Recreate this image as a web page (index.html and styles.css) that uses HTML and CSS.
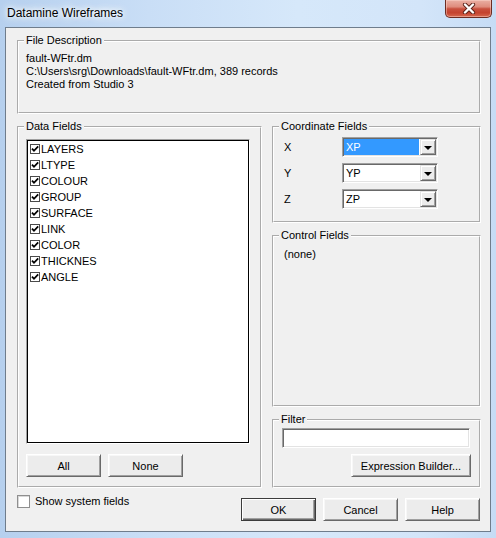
FILE: index.html
```html
<!DOCTYPE html>
<html>
<head>
<meta charset="utf-8">
<title>Datamine Wireframes</title>
<link rel="stylesheet" href="styles.css">
</head>
<body>
<div class="window">
  <div class="titlebar">
    <span class="title">Datamine Wireframes</span>
    <div class="close">
      <svg width="14" height="11" viewBox="0 0 14 11">
        <path d="M3 1.5 L11 9.5 M11 1.5 L3 9.5" stroke="#5b2219" stroke-width="4.2" stroke-linecap="round" fill="none"/>
        <path d="M3 1.5 L11 9.5 M11 1.5 L3 9.5" stroke="#ffffff" stroke-width="2.4" stroke-linecap="round" fill="none"/>
      </svg>
    </div>
  </div>
  <div class="client">
    <fieldset class="group">
      <legend>File Description</legend>
      <div class="desc-body">
        <div>fault-WFtr.dm</div>
        <div>C:\Users\srg\Downloads\fault-WFtr.dm, 389 records</div>
        <div>Created from Studio 3</div>
      </div>
    </fieldset>

    <div class="main">
      <fieldset class="group data-fields">
        <legend>Data Fields</legend>
        <div class="data-body">
          <div class="listbox">
            <div class="item"><span class="chk"><svg width="10" height="10" viewBox="0 0 10 10"><rect x="0.5" y="0.5" width="9" height="9" fill="#fff" stroke="#4a4a4a"/><path d="M2 4.6 L4 6.8 L8.2 2.4" stroke="#000" stroke-width="1.8" fill="none"/></svg></span>LAYERS</div>
            <div class="item"><span class="chk"><svg width="10" height="10" viewBox="0 0 10 10"><rect x="0.5" y="0.5" width="9" height="9" fill="#fff" stroke="#4a4a4a"/><path d="M2 4.6 L4 6.8 L8.2 2.4" stroke="#000" stroke-width="1.8" fill="none"/></svg></span>LTYPE</div>
            <div class="item"><span class="chk"><svg width="10" height="10" viewBox="0 0 10 10"><rect x="0.5" y="0.5" width="9" height="9" fill="#fff" stroke="#4a4a4a"/><path d="M2 4.6 L4 6.8 L8.2 2.4" stroke="#000" stroke-width="1.8" fill="none"/></svg></span>COLOUR</div>
            <div class="item"><span class="chk"><svg width="10" height="10" viewBox="0 0 10 10"><rect x="0.5" y="0.5" width="9" height="9" fill="#fff" stroke="#4a4a4a"/><path d="M2 4.6 L4 6.8 L8.2 2.4" stroke="#000" stroke-width="1.8" fill="none"/></svg></span>GROUP</div>
            <div class="item"><span class="chk"><svg width="10" height="10" viewBox="0 0 10 10"><rect x="0.5" y="0.5" width="9" height="9" fill="#fff" stroke="#4a4a4a"/><path d="M2 4.6 L4 6.8 L8.2 2.4" stroke="#000" stroke-width="1.8" fill="none"/></svg></span>SURFACE</div>
            <div class="item"><span class="chk"><svg width="10" height="10" viewBox="0 0 10 10"><rect x="0.5" y="0.5" width="9" height="9" fill="#fff" stroke="#4a4a4a"/><path d="M2 4.6 L4 6.8 L8.2 2.4" stroke="#000" stroke-width="1.8" fill="none"/></svg></span>LINK</div>
            <div class="item"><span class="chk"><svg width="10" height="10" viewBox="0 0 10 10"><rect x="0.5" y="0.5" width="9" height="9" fill="#fff" stroke="#4a4a4a"/><path d="M2 4.6 L4 6.8 L8.2 2.4" stroke="#000" stroke-width="1.8" fill="none"/></svg></span>COLOR</div>
            <div class="item"><span class="chk"><svg width="10" height="10" viewBox="0 0 10 10"><rect x="0.5" y="0.5" width="9" height="9" fill="#fff" stroke="#4a4a4a"/><path d="M2 4.6 L4 6.8 L8.2 2.4" stroke="#000" stroke-width="1.8" fill="none"/></svg></span>THICKNES</div>
            <div class="item"><span class="chk"><svg width="10" height="10" viewBox="0 0 10 10"><rect x="0.5" y="0.5" width="9" height="9" fill="#fff" stroke="#4a4a4a"/><path d="M2 4.6 L4 6.8 L8.2 2.4" stroke="#000" stroke-width="1.8" fill="none"/></svg></span>ANGLE</div>
          </div>
          <div class="btn-row">
            <button class="btn">All</button>
            <button class="btn">None</button>
          </div>
        </div>
      </fieldset>

      <div class="right-col">
        <fieldset class="group">
          <legend>Coordinate Fields</legend>
          <div class="coord-body">
            <div class="coord-row">
              <span class="coord-label">X</span>
              <div class="combo">
                <div class="combo-edit"><span class="sel">XP</span></div>
                <div class="combo-btn"><span class="tri"></span></div>
              </div>
            </div>
            <div class="coord-row">
              <span class="coord-label">Y</span>
              <div class="combo">
                <div class="combo-edit"><span class="val">YP</span></div>
                <div class="combo-btn"><span class="tri"></span></div>
              </div>
            </div>
            <div class="coord-row">
              <span class="coord-label">Z</span>
              <div class="combo">
                <div class="combo-edit"><span class="val">ZP</span></div>
                <div class="combo-btn"><span class="tri"></span></div>
              </div>
            </div>
          </div>
        </fieldset>

        <fieldset class="group control">
          <legend>Control Fields</legend>
          <div class="control-body">(none)</div>
        </fieldset>

        <fieldset class="group">
          <legend>Filter</legend>
          <div class="filter-body">
            <div class="textbox"></div>
            <button class="btn expr">Expression Builder...</button>
          </div>
        </fieldset>
      </div>
    </div>

    <div class="footer">
      <label class="sys"><span class="box"></span>Show system fields</label>
      <div class="footer-btns">
        <button class="btn default">OK</button>
        <button class="btn">Cancel</button>
        <button class="btn">Help</button>
      </div>
    </div>
  </div>
</div>
</body>
</html>
```
FILE: styles.css
```css
* { box-sizing: border-box; }

html, body {
  margin: 0;
  padding: 0;
}

body {
  width: 496px;
  height: 538px;
  overflow: hidden;
  font-family: "Liberation Sans", Arial, sans-serif;
  font-size: 11px;
  line-height: 13px;
  color: #000;
}

.window {
  width: 496px;
  height: 538px;
  padding: 0 5px 6px 5px;
  display: flex;
  flex-direction: column;
  background: linear-gradient(to right, #b6d0ee 0%, #c9def6 30%, #d6e8fa 60%, #d3e5f9 85%, #c6dcf5 100%);
}

.titlebar {
  height: 27px;
  flex: none;
  display: flex;
  justify-content: space-between;
  align-items: flex-start;
}

.title {
  font-size: 12px;
  line-height: 16px;
  margin: 5px 0 0 2px;
  color: #000;
  text-shadow: 0 0 4px #fff, 0 0 8px #fff, 0 0 10px #eaf4ff;
}

.close {
  width: 47px;
  height: 18px;
  margin-right: -1px;
  border: 1px solid #6c2c22;
  border-top: none;
  border-radius: 0 0 5px 5px;
  background: linear-gradient(#eab0a4 0%, #df8c7d 40%, #c8503e 52%, #c4432f 75%, #d7694f 100%);
  box-shadow: inset 0 0 0 1px rgba(255, 220, 210, 0.45);
  display: flex;
  align-items: center;
  justify-content: center;
}

.close svg { display: block; }

.client {
  flex: 1;
  background: #f0f0f0;
  border: 1px solid #6f7d8c;
  padding: 6px 9px 10px 11px;
  display: flex;
  flex-direction: column;
}

fieldset.group {
  margin: 0;
  padding: 0;
  min-width: 0;
  border: 2px groove #ffffff;
}

fieldset.group legend {
  margin-left: 5px;
  padding: 0 2px;
  line-height: 13px;
}

.desc-body {
  padding: 5px 7px 21px 7px;
}

.main {
  margin-top: 6px;
  display: flex;
  gap: 10px;
}

.data-fields {
  width: 245px;
  flex: none;
}

.data-body {
  padding: 6px 8px 9px 7px;
}

.listbox {
  width: 224px;
  height: 305px;
  background: #fff;
  border: 1px solid;
  border-color: #a0a0a0 #ffffff #ffffff #a0a0a0;
  box-shadow: inset 0 0 0 1px #000;
  padding: 1px;
}

.item {
  height: 16px;
  display: flex;
  align-items: center;
  white-space: nowrap;
}

.chk {
  width: 10px;
  height: 10px;
  margin: 0 1px 0 2px;
  display: block;
}

.chk svg { display: block; }

.btn-row {
  margin-top: 10px;
  display: flex;
  gap: 7px;
}

.btn {
  width: 75px;
  height: 23px;
  padding: 0;
  margin: 0;
  font-family: "Liberation Sans", Arial, sans-serif;
  font-size: 11px;
  color: #000;
  background: #ececec;
  border: 1px solid;
  border-color: #ffffff #696969 #696969 #ffffff;
  box-shadow: inset 1px 1px 0 #f7f7f7, inset -1px -1px 0 #a0a0a0;
}

.btn.default {
  border: 1px solid #3c3c3c;
  box-shadow: inset 1px 1px 0 #fff, inset -1px -1px 0 #696969, inset -2px -2px 0 #a0a0a0;
}

.right-col {
  width: 209px;
  flex: none;
  display: flex;
  flex-direction: column;
  gap: 6px;
}

.coord-body {
  padding: 4px 8px 12px 10px;
  display: flex;
  flex-direction: column;
  gap: 6px;
}

.coord-row {
  display: flex;
  align-items: center;
  height: 20px;
}

.coord-label {
  width: 58px;
  flex: none;
}

.combo {
  width: 96px;
  height: 20px;
  display: flex;
  background: #fff;
  border: 1px solid;
  border-color: #a0a0a0 #ffffff #ffffff #a0a0a0;
  box-shadow: inset 1px 1px 0 #696969, inset -1px -1px 0 #e3e3e3;
  padding: 1px 1px 1px 1px;
}

.combo-edit {
  flex: 1;
  display: flex;
  padding-right: 1px;
}

.sel {
  flex: 1;
  background: #3399ff;
  color: #fff;
  padding-left: 2px;
  line-height: 16px;
}

.val {
  padding-left: 2px;
  line-height: 16px;
}

.combo-btn {
  width: 16px;
  height: 16px;
  background: #ececec;
  border: 1px solid;
  border-color: #e3e3e3 #696969 #696969 #e3e3e3;
  box-shadow: inset 1px 1px 0 #fff, inset -1px -1px 0 #a0a0a0;
  display: flex;
  align-items: center;
  justify-content: center;
}

.tri {
  width: 0;
  height: 0;
  border-left: 4px solid transparent;
  border-right: 4px solid transparent;
  border-top: 4px solid #000;
  margin-top: 1px;
}

.control {
  flex: 1;
}

.control-body {
  padding: 6px 10px;
}

.filter-body {
  padding: 2px 8px 9px 8px;
  display: flex;
  flex-direction: column;
  align-items: flex-end;
  gap: 6px;
}

.textbox {
  width: 188px;
  height: 20px;
  align-self: flex-start;
  background: #fff;
  border: 1px solid;
  border-color: #a0a0a0 #ffffff #ffffff #a0a0a0;
  box-shadow: inset 1px 1px 0 #696969, inset -1px -1px 0 #e3e3e3;
}

.btn.expr {
  width: 120px;
}

.footer {
  padding-top: 7px;
  display: flex;
  justify-content: space-between;
  align-items: flex-start;
}

.sys {
  display: flex;
  align-items: center;
  height: 13px;
}

.sys .box {
  width: 13px;
  height: 13px;
  margin-right: 5px;
  background: #fff;
  border: 1px solid #8f8f8f;
  box-shadow: inset 1px 1px 0 #d8d8d8;
}

.footer-btns {
  margin-top: 3px;
  margin-right: 1px;
  display: flex;
  gap: 7px;
}
```
